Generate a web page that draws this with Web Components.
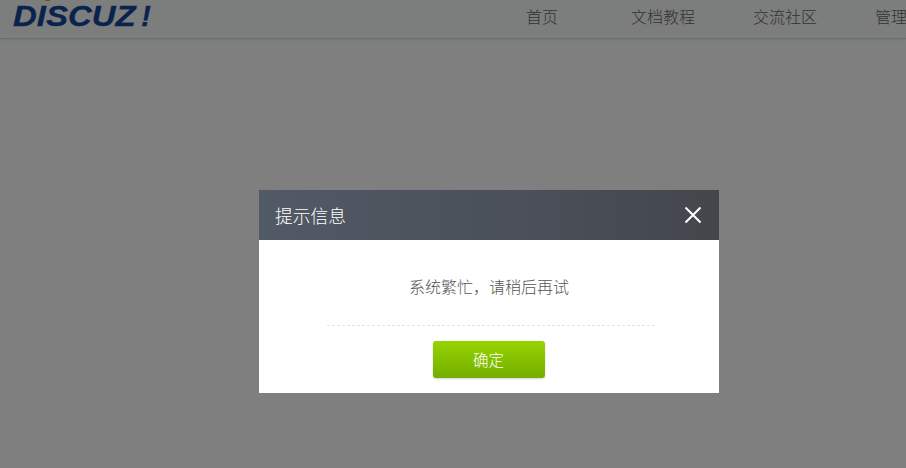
<!DOCTYPE html>
<html lang="zh-CN">
<head>
<meta charset="utf-8">
<title>提示信息</title>
<style>
  html, body { margin: 0; height: 100%; overflow: hidden; background: #fff; }
  body { font-family: "Noto Sans CJK SC", "Liberation Sans", sans-serif; }
</style>
</head>
<body>
<site-header></site-header>
<modal-overlay>
  <alert-dialog heading="提示信息" button="确定">系统繁忙，请稍后再试</alert-dialog>
</modal-overlay>

<script>
// Top bar with logo and nav
class SiteHeader extends HTMLElement {
  constructor() {
    super();
    this.attachShadow({ mode: 'open' });
  }

  connectedCallback() {
    const links = ['首页', '文档教程', '交流社区', '管理'];
    this.shadowRoot.innerHTML = `
      <style>
        :host { display: block; height: 38px; background: #f9fafb; border-bottom: 1px solid #cfe0ea; box-shadow: 0 1px 2px #dfe9f0; }
        header { display: flex; align-items: flex-start; height: 38px; white-space: nowrap; }
        .logo {
          position: relative;
          width: 526px;
          height: 31px;
          flex: none;
          padding: 0 0 0 13px;
          box-sizing: border-box;
          font: italic 700 27px/31px "Liberation Sans", sans-serif;
          color: #12479a;
          -webkit-text-stroke: .3px #12479a;
        }
        .logo span { display: inline-block; transform-origin: left top; transform: scale(1.22, 1.1); }
        .logo b { position: absolute; left: 141px; top: 0; font-weight: 700; transform-origin: left top; transform: scale(1.1, 1.1); }
        .logo i { position: absolute; left: 45px; top: 0; width: 5px; height: 1px; background: #e8a020; }
        nav { display: flex; gap: 58px; font-size: 16px; line-height: 32px; color: #666; font-weight: 300; }
        nav a:first-child { margin-right: 15px; }
      </style>
      <header>
        <div class="logo"><i></i><span>DISCUZ</span><b>!</b></div>
        <nav>${links.map(l => `<a>${l}</a>`).join('')}</nav>
      </header>
    `;
  }
}
customElements.define('site-header', SiteHeader);

// Grey layer over the page, holds the dialog
class ModalOverlay extends HTMLElement {
  constructor() {
    super();
    this.attachShadow({ mode: 'open' });
  }

  connectedCallback() {
    this.shadowRoot.innerHTML = `
      <style>
        :host { position: fixed; inset: 0; background: rgba(0, 0, 0, .5); display: block; }
        .wrap { display: flex; padding: 190px 0 0 259px; }
      </style>
      <div class="wrap"><slot></slot></div>
    `;
  }
}
customElements.define('modal-overlay', ModalOverlay);

// The message box
class AlertDialog extends HTMLElement {
  constructor() {
    super();
    this.attachShadow({ mode: 'open' });
  }

  connectedCallback() {
    const heading = this.getAttribute('heading');
    const button = this.getAttribute('button');
    this.shadowRoot.innerHTML = `
      <style>
        :host { display: block; width: 460px; background: #fff; }
        .head {
          height: 50px;
          display: flex;
          align-items: center;
          justify-content: space-between;
          padding: 0 16px;
          background: linear-gradient(90deg, #515a65, #4a4f59 60%, #43474c);
          color: #fff;
          font-size: 17.8px;
          font-weight: 300;
          line-height: 48px;
        }
        .close { width: 18px; height: 18px; display: block; margin-right: 1px; }
        .msg { padding-top: 34px; height: 51px; line-height: 24px; text-align: center; font-size: 16px; font-weight: 300; color: #555; }
        .rule { margin: 0 64px 0 68px; border-top: 1px dashed #e4e4e4; }
        .foot { display: flex; justify-content: center; padding: 15px 0 15px; margin-left: -1px; }
        button {
          width: 112px;
          height: 37px;
          border: 0;
          border-radius: 3px;
          background: linear-gradient(#96d400, #74ae00);
          box-shadow: 0 1px 2px rgba(0, 0, 0, .18);
          color: #fff;
          font: 300 15.5px "Noto Sans CJK SC", sans-serif;
          padding: 0 0 2px;
        }
      </style>
      <div class="head">
        <span>${heading}</span>
        <svg class="close" viewBox="0 0 18 18"><path d="M1.5 1.5 16.5 16.5M16.5 1.5 1.5 16.5" stroke="#fff" stroke-width="2" fill="none"/></svg>
      </div>
      <div class="msg"><slot></slot></div>
      <div class="rule"></div>
      <div class="foot"><button>${button}</button></div>
    `;
  }
}
customElements.define('alert-dialog', AlertDialog);
</script>
</body>
</html>
